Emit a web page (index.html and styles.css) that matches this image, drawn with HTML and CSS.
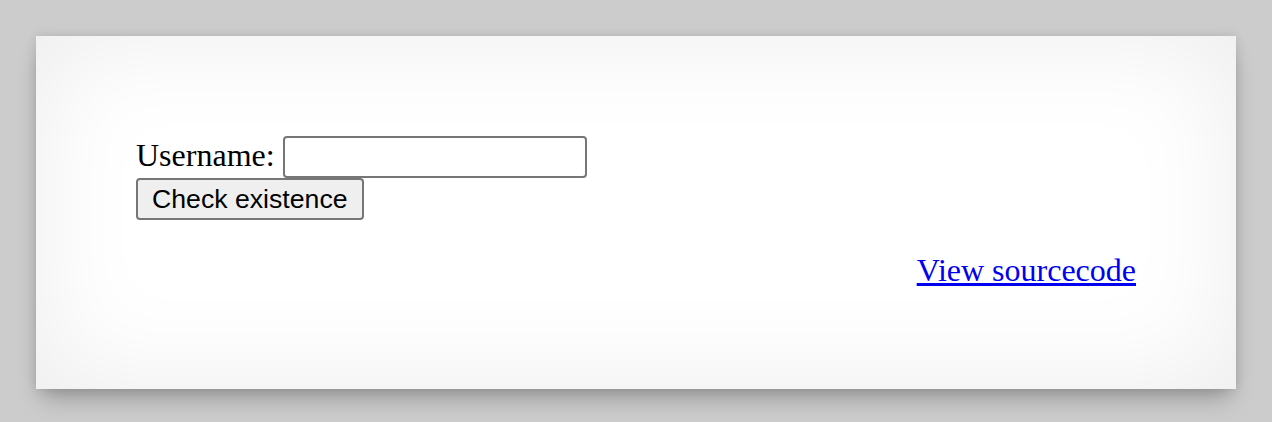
FILE: index.html
```
<!DOCTYPE html>
<html lang="en">
<head>
    <meta charset="UTF-8">
    <meta name="viewport" content="width=device-width, initial-scale=1.0">
    <title>natas</title>
    <link rel="stylesheet" href="styles.css">
</head>
<body>

    <div class="content">
        <form class="check-form" action="index.php" method="POST">
            Username: <input type="text" name="username" class="user-input"><br>
            <input type="submit" name="submit" value="Check existence" class="check-btn">
        </form>
        <div class="viewsource"><a href="index-source.html">View sourcecode</a></div>
    </div>

</body>
</html>
```

FILE: styles.css
```
body {
    margin: 0;
    padding: 36px;
    background-color: #cccccc;
    font-family: "Liberation Serif", "Times New Roman", serif;
    font-size: 32px;
}
.content {
    width: 1000px;
    margin: 0 auto;
    padding: 100px;
    background-color: #ffffff;
    box-shadow: 0 14px 22px -6px rgba(0, 0, 0, 0.28),
                0 0 10px rgba(0, 0, 0, 0.12),
                inset 0 0 110px rgba(0, 0, 0, 0.08);
}
.check-form {
    margin: 0 0 32px 0;
}
.user-input {
    width: 304px;
    height: 42px;
    box-sizing: border-box;
    border: 2px solid #767676;
    border-radius: 4px;
    padding: 2px 4px;
    font-size: 26px;
    vertical-align: baseline;
}
.check-btn {
    height: 42px;
    box-sizing: border-box;
    padding: 0 14px;
    border: 2px solid #767676;
    border-radius: 4px;
    background-color: #efefef;
    color: #000000;
    font-family: "Liberation Sans", Arial, sans-serif;
    font-size: 26.67px;
}
.viewsource {
    text-align: right;
}
.viewsource a {
    color: #0000ee;
}
```
